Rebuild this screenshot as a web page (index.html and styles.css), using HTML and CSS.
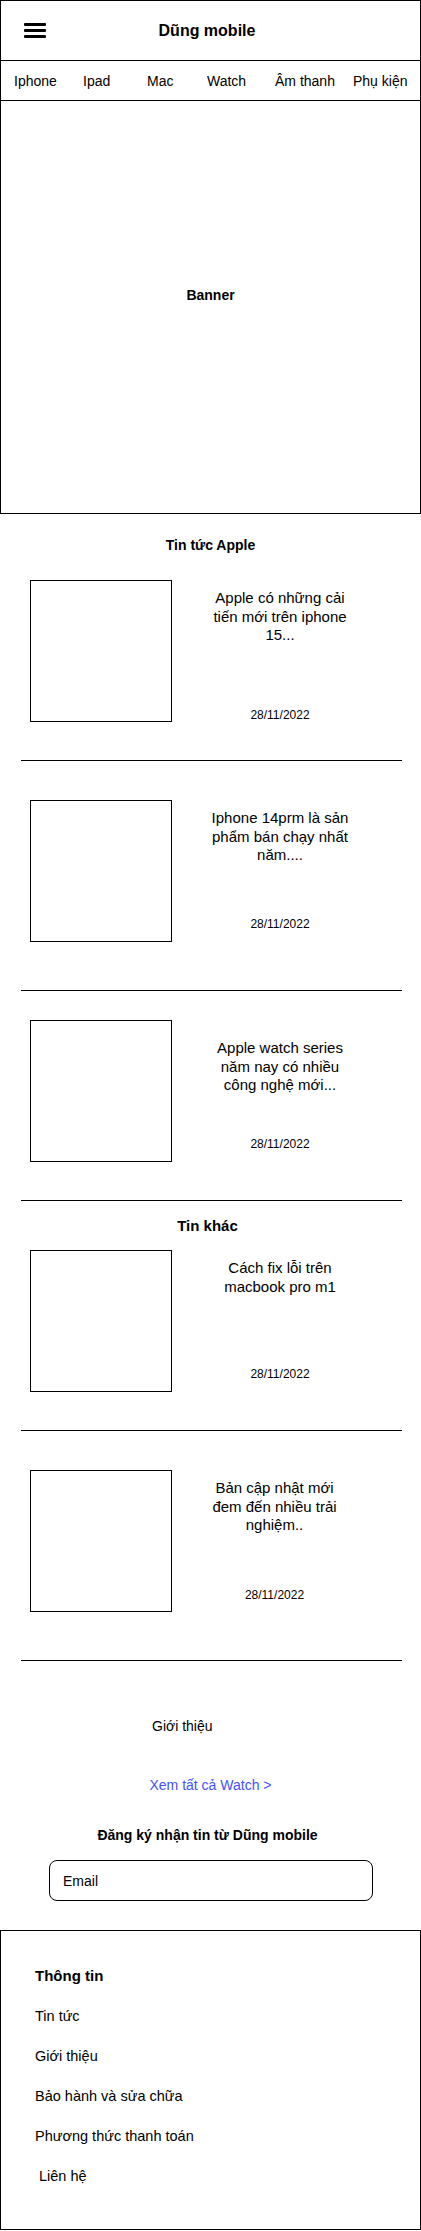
FILE: index.html
```html
<!DOCTYPE html>
<html lang="vi">
<head>
<meta charset="utf-8">
<title>Dũng mobile</title>
<link rel="stylesheet" href="styles.css">
</head>
<body>
<div class="page">
  <section class="top">
    <header class="header">
      <button class="menu" aria-label="Menu"><span></span><span></span><span></span></button>
      <h1 class="brand">Dũng mobile</h1>
      <div></div>
    </header>
    <nav class="nav">
      <a>Iphone</a>
      <a>Ipad</a>
      <a>Mac</a>
      <a>Watch</a>
      <a>Âm thanh</a>
      <a>Phụ kiện</a>
    </nav>
    <div class="banner">Banner</div>
  </section>

  <section class="news">
    <h2 class="section-title section-title--apple">Tin tức Apple</h2>
    <article class="news-item news-item--first-apple news-item--pb38">
      <div class="thumb"></div>
      <div class="news-body news-body--date-low">
        <p class="news-title">Apple có những cải<br>tiến mới trên iphone<br>15...</p>
        <time class="news-date">28/11/2022</time>
      </div>
    </article>
    <article class="news-item news-item--pt39 news-item--pb48">
      <div class="thumb"></div>
      <div class="news-body">
        <p class="news-title">Iphone 14prm là sản<br>phẩm bán chạy nhất<br>năm....</p>
        <time class="news-date">28/11/2022</time>
      </div>
    </article>
    <article class="news-item news-item--pt29 news-item--pb38">
      <div class="thumb"></div>
      <div class="news-body news-body--title-low">
        <p class="news-title">Apple watch series<br>năm nay có nhiều<br>công nghệ mới...</p>
        <time class="news-date">28/11/2022</time>
      </div>
    </article>

    <h2 class="section-title section-title--other">Tin khác</h2>
    <article class="news-item news-item--first-other news-item--pb38">
      <div class="thumb"></div>
      <div class="news-body">
        <p class="news-title">Cách fix lỗi trên<br>macbook pro m1</p>
        <time class="news-date">28/11/2022</time>
      </div>
    </article>
    <article class="news-item news-item--pt39 news-item--pb48">
      <div class="thumb"></div>
      <div class="news-body news-body--date-left">
        <p class="news-title">Bản cập nhật mới<br>đem đến nhiều trải<br>nghiệm..</p>
        <time class="news-date">28/11/2022</time>
      </div>
    </article>
  </section>

  <p class="intro">Giới thiệu</p>
  <a class="see-all">Xem tất cả Watch &gt;</a>

  <section class="subscribe">
    <h2 class="subscribe-title">Đăng ký nhận tin từ Dũng mobile</h2>
    <input class="email" type="email" placeholder="Email">
  </section>

  <footer class="footer">
    <h3 class="footer-title">Thông tin</h3>
    <a class="footer-link">Tin tức</a>
    <a class="footer-link">Giới thiệu</a>
    <a class="footer-link">Bảo hành và sửa chữa</a>
    <a class="footer-link">Phương thức thanh toán</a>
    <a class="footer-link footer-link--indent">Liên hệ</a>
  </footer>
</div>
</body>
</html>
```

FILE: styles.css
```css
* {
  box-sizing: border-box;
}

body {
  margin: 0;
  background: #fff;
  color: #000;
  font-family: "Liberation Sans", Arial, Helvetica, sans-serif;
}

.page {
  width: 421px;
}

/* ---------- top box ---------- */
.top {
  border: 1px solid #000;
}

.header {
  height: 59px;
  display: grid;
  grid-template-columns: 1fr auto 1fr;
  align-items: center;
  padding: 0 30px 0 23px;
}

.menu {
  display: flex;
  flex-direction: column;
  gap: 3px;
  width: 22px;
  padding: 0;
  border: 0;
  background: none;
}

.menu span {
  display: block;
  width: 22px;
  height: 3px;
  background: #000;
  border-radius: 1px;
}

.brand {
  margin: 0;
  font-size: 16px;
  font-weight: bold;
  line-height: 20px;
}

.nav {
  height: 41px;
  border-top: 1px solid #000;
  border-bottom: 1px solid #000;
  display: grid;
  grid-template-columns: 69px 64px 60px 68px 78px auto;
  align-items: center;
  padding-left: 13px;
  font-size: 14px;
}

.nav a {
  white-space: nowrap;
}

.banner {
  height: 412px;
  display: flex;
  align-items: center;
  justify-content: center;
  padding-bottom: 24px;
  font-size: 14px;
  font-weight: bold;
}

/* ---------- news ---------- */
.section-title {
  margin: 0;
  text-align: center;
  font-weight: bold;
  line-height: 18px;
}

.section-title--apple {
  margin-top: 22px;
  font-size: 14px;
}

.section-title--other {
  margin-top: 16px;
  font-size: 15px;
  padding-right: 6px;
}

.news-item {
  display: flex;
  margin: 0 19px 0 21px;
  padding-left: 9px;
  padding-right: 14px;
  border-bottom: 1px solid #000;
}

.news-item--first-apple { padding-top: 26px; }
.news-item--first-other { padding-top: 15px; }
.news-item--pt39 { padding-top: 39px; }
.news-item--pt29 { padding-top: 29px; }
.news-item--pb38 { padding-bottom: 38px; }
.news-item--pb48 { padding-bottom: 48px; }

.thumb {
  flex: none;
  width: 142px;
  height: 142px;
  border: 1px solid #000;
}

.news-body {
  flex: 1;
  display: flex;
  flex-direction: column;
  align-items: center;
  text-align: center;
  padding-top: 9px;
  padding-bottom: 11px;
}

.news-body--title-low { padding-top: 19px; }
.news-body--date-low { padding-bottom: 0; }
.news-body--date-left { padding-bottom: 10px; padding-right: 11px; }

.news-title {
  margin: 0;
  font-size: 15px;
  line-height: 18.5px;
}

.news-date {
  margin-top: auto;
  font-size: 12px;
  line-height: 14px;
}

/* ---------- misc ---------- */
.intro {
  margin: 56px 0 0;
  padding-left: 152px;
  font-size: 14px;
  line-height: 18px;
}

.see-all {
  display: block;
  margin-top: 41px;
  text-align: center;
  color: #3f51ff;
  font-size: 14px;
  line-height: 18px;
}

.subscribe {
  display: flex;
  flex-direction: column;
  align-items: center;
}

.subscribe-title {
  margin: 32px 0 0;
  padding-right: 6px;
  font-size: 14px;
  font-weight: bold;
  line-height: 18px;
}

.email {
  display: block;
  margin: 16px 0 0 1px;
  width: 324px;
  height: 41px;
  padding: 0 0 0 13px;
  border: 1px solid #000;
  border-radius: 8px;
  background: #fff;
  font-family: inherit;
  font-size: 14px;
  color: #000;
  outline: none;
}

.email::placeholder {
  color: #000;
  opacity: 1;
}

/* ---------- footer ---------- */
.footer {
  margin-top: 29px;
  border: 1px solid #000;
  padding: 36px 0 44px 34px;
  display: flex;
  flex-direction: column;
  align-items: flex-start;
}

.footer-title {
  margin: 0;
  font-size: 15px;
  font-weight: bold;
  line-height: 18px;
}

.footer-link {
  margin-top: 22px;
  font-size: 14.5px;
  line-height: 18px;
}

.footer-link--indent {
  padding-left: 4px;
}
```
